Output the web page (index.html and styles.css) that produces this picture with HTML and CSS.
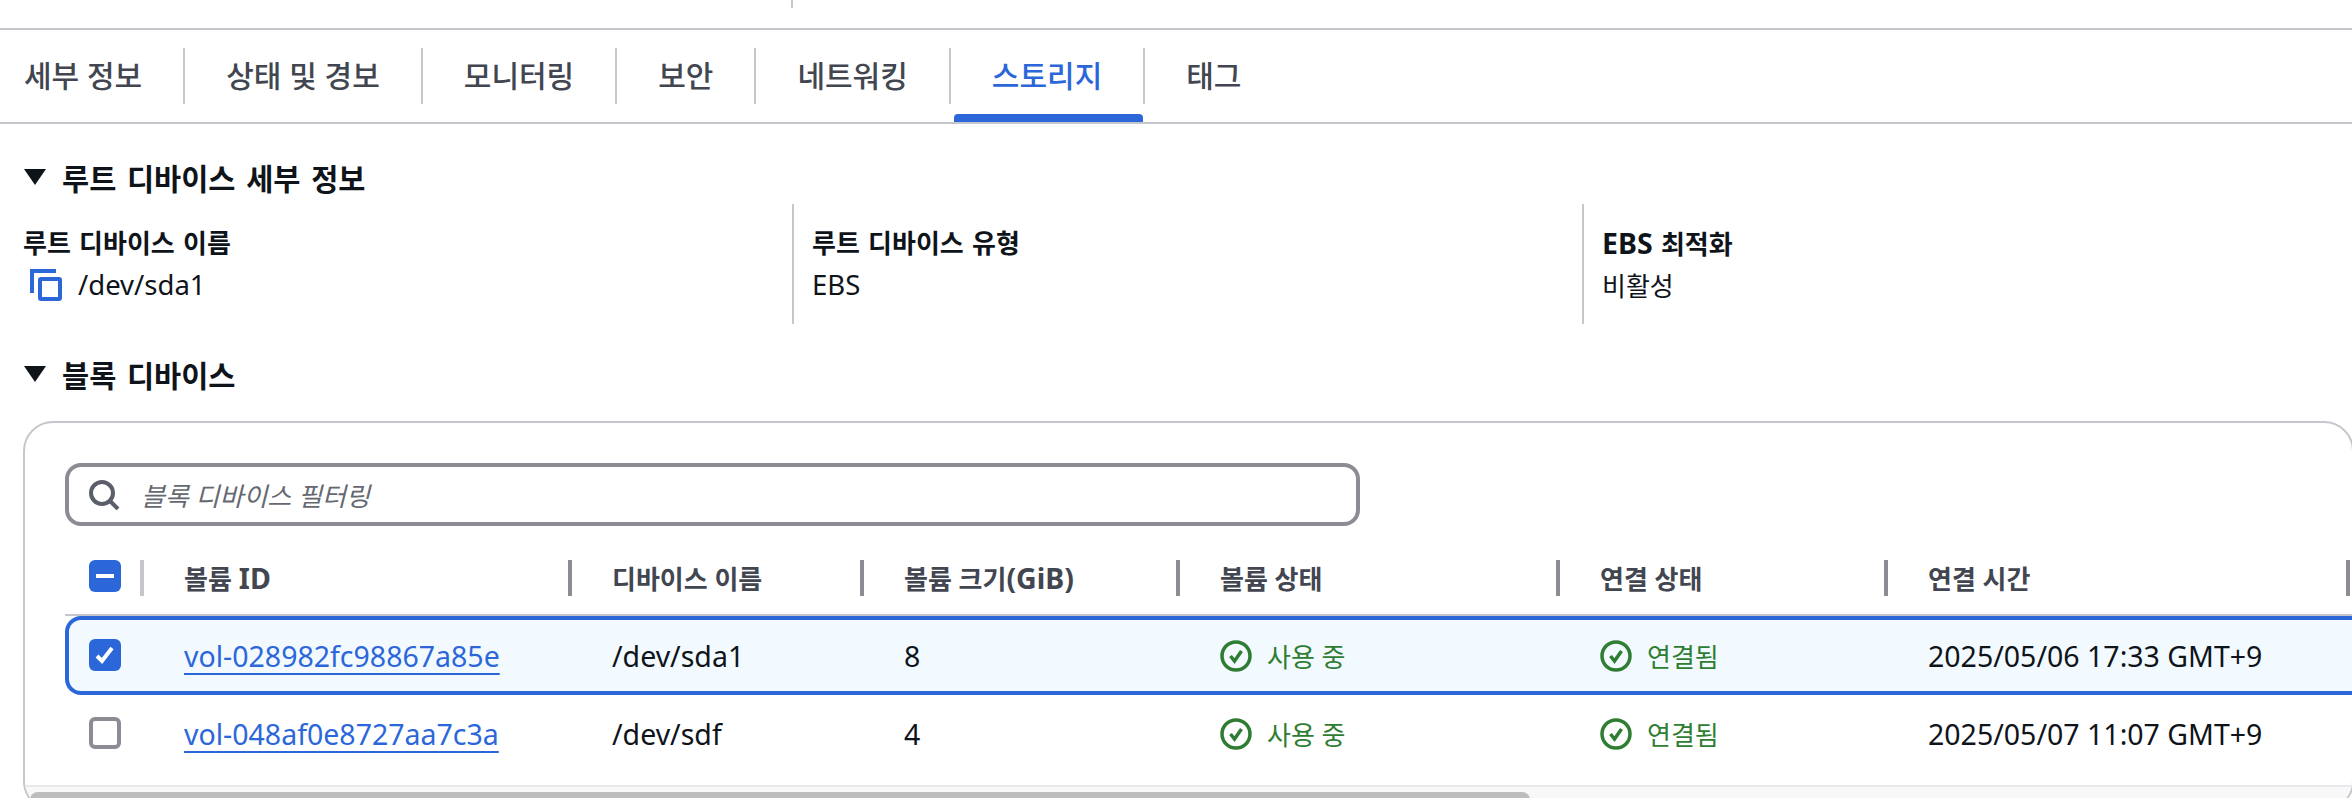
FILE: index.html
```html
<!DOCTYPE html>
<html lang="ko">
<head>
  <meta charset="UTF-8">
  <title>스토리지</title>
  <link rel="stylesheet" href="styles.css">
</head>
<body>
<div class="top-strip"><span class="top-tick"></span></div>

<div class="tabs">
  <div class="tab first">세부 정보</div>
  <div class="tab">상태 및 경보</div>
  <div class="tab">모니터링</div>
  <div class="tab">보안</div>
  <div class="tab">네트워킹</div>
  <div class="tab active">스토리지</div>
  <div class="tab last">태그</div>
</div>

<div class="section-head"><span class="caret"></span>루트 디바이스 세부 정보</div>
<div class="details">
  <div class="detail">
    <div class="label">루트 디바이스 이름</div>
    <div class="value copy">
      <svg class="copy-icon" width="32" height="32" viewBox="0 0 32 32" fill="none" stroke="#2c67d9" stroke-width="4">
        <path d="M2 24V2h24"/>
        <rect x="10" y="10" width="20" height="20" rx="1"/>
      </svg>
      <span class="en">/dev/sda1</span>
    </div>
  </div>
  <div class="detail">
    <div class="label">루트 디바이스 유형</div>
    <div class="value"><span class="en">EBS</span></div>
  </div>
  <div class="detail">
    <div class="label"><span class="en">EBS</span> 최적화</div>
    <div class="value">비활성</div>
  </div>
</div>

<div class="section-head second"><span class="caret"></span>블록 디바이스</div>

<div class="panel">
  <div class="filter">
    <svg width="31" height="30" viewBox="0 0 31 30" fill="none" stroke="#5b5f6a" stroke-width="4">
      <circle cx="13" cy="13" r="11"/>
      <path d="M21 21l8 8"/>
    </svg>
    <span class="filter-text">블록 디바이스 필터링</span>
  </div>

  <div class="row head">
    <div class="cell check"><span class="box on"><span class="dash"></span></span></div>
    <div class="cell">볼륨 <span class="en">ID</span></div>
    <div class="cell">디바이스 이름</div>
    <div class="cell">볼륨 크기<span class="en">(GiB)</span></div>
    <div class="cell">볼륨 상태</div>
    <div class="cell">연결 상태</div>
    <div class="cell">연결 시간</div>
  </div>

  <div class="row selected">
    <div class="cell check">
      <span class="box on">
        <svg width="32" height="32" viewBox="0 0 32 32" fill="none" stroke="#fff" stroke-width="4"><path d="M8 17l5 5 10-13"/></svg>
      </span>
    </div>
    <div class="cell en"><a class="vol">vol-028982fc98867a85e</a></div>
    <div class="cell en">/dev/sda1</div>
    <div class="cell en">8</div>
    <div class="cell status">
      <svg width="32" height="32" viewBox="0 0 32 32" fill="none" stroke="#2e7d32" stroke-width="3.5"><circle cx="16" cy="16" r="14"/><path d="M10.5 16l4 5 7-10"/></svg>
      사용 중
    </div>
    <div class="cell status">
      <svg width="32" height="32" viewBox="0 0 32 32" fill="none" stroke="#2e7d32" stroke-width="3.5"><circle cx="16" cy="16" r="14"/><path d="M10.5 16l4 5 7-10"/></svg>
      연결됨
    </div>
    <div class="cell en">2025/05/06 17:33 GMT+9</div>
  </div>

  <div class="row">
    <div class="cell check"><span class="box"></span></div>
    <div class="cell en"><a class="vol">vol-048af0e8727aa7c3a</a></div>
    <div class="cell en">/dev/sdf</div>
    <div class="cell en">4</div>
    <div class="cell status">
      <svg width="32" height="32" viewBox="0 0 32 32" fill="none" stroke="#2e7d32" stroke-width="3.5"><circle cx="16" cy="16" r="14"/><path d="M10.5 16l4 5 7-10"/></svg>
      사용 중
    </div>
    <div class="cell status">
      <svg width="32" height="32" viewBox="0 0 32 32" fill="none" stroke="#2e7d32" stroke-width="3.5"><circle cx="16" cy="16" r="14"/><path d="M10.5 16l4 5 7-10"/></svg>
      연결됨
    </div>
    <div class="cell en">2025/05/07 11:07 GMT+9</div>
  </div>

  <div class="scroll-track"><div class="scroll-thumb"></div></div>
</div>
</body>
</html>
```

FILE: styles.css
```css
html, body {
  margin: 0;
  height: 798px;
  overflow: hidden;
  background: #fff;
}

body {
  width: 2352px;
  font-family: "Noto Sans", "Noto Sans CJK KR", sans-serif;
  font-size: 26px;
  color: #0f141a;
}

.en {
  font-size: 28.5px;
}

.top-strip {
  height: 28px;
  border-bottom: 2px solid #c6c6cd;
}

.top-tick {
  display: block;
  width: 2px;
  height: 8px;
  margin-left: 791px;
  background: #c6c6cd;
}

/* tabs */
.tabs {
  display: flex;
  height: 92px;
  border-bottom: 2px solid #c6c6cd;
}

.tab {
  position: relative;
  box-sizing: border-box;
  height: 56px;
  margin-top: 18px;
  padding: 0 41px;
  border-right: 2px solid #c6c6cd;
  font-size: 30px;
  font-weight: 500;
  line-height: 56px;
  color: #424650;
  white-space: nowrap;
}

.tab.first {
  padding-left: 24px;
}

.tab.last {
  border-right: 0;
}

.tab.active {
  color: #2c67d9;
}

.tab.active::after {
  content: "";
  position: absolute;
  left: 3px;
  right: 0;
  bottom: -18px;
  height: 8px;
  border-radius: 4px 4px 0 0;
  background: #2c67d9;
}

/* sections */
.section-head {
  display: flex;
  align-items: center;
  margin: 35px 0 0 24px;
  height: 36px;
  font-size: 29.5px;
  font-weight: 700;
  word-spacing: 3px;
}

.section-head.second {
  margin-top: 32px;
}

.caret {
  width: 0;
  height: 0;
  margin-right: 16px;
  border-left: 11px solid transparent;
  border-right: 11px solid transparent;
  border-top: 16px solid #0f141a;
}

.details {
  display: grid;
  grid-template-columns: 769px 790px 1fr;
  margin: 9px 0 0 23px;
}

.detail {
  height: 120px;
  padding-top: 21px;
  box-sizing: border-box;
}

.detail + .detail {
  border-left: 2px solid #c6c6cd;
  padding-left: 18px;
}

.label {
  font-weight: 700;
  word-spacing: 1.5px;
  line-height: 36px;
}

.value {
  margin-top: 6px;
  line-height: 36px;
}

.value .en {
  font-size: 27.5px;
}

.copy {
  display: flex;
  align-items: center;
  gap: 16px;
  padding-left: 7px;
}

/* table panel */
.panel {
  box-sizing: border-box;
  width: 2331px;
  height: 390px;
  margin: 29px 0 0 23px;
  padding-top: 40px;
  border: 2px solid #c6c6cd;
  border-radius: 30px;
  overflow: hidden;
}

.filter {
  display: flex;
  align-items: center;
  gap: 21px;
  box-sizing: border-box;
  width: 1295px;
  height: 63px;
  margin-left: 40px;
  padding-left: 20px;
  border: 4px solid #8c8c94;
  border-radius: 16px;
}

.filter-text {
  font-style: italic;
  color: #656871;
}

.row {
  display: grid;
  grid-template-columns: 79px 428px 292px 316px 380px 328px 462px;
  align-items: center;
  box-sizing: border-box;
  width: 2320px;
  height: 78px;
  margin-left: 40px;
}

.row.head {
  height: 90px;
  padding-top: 16px;
  border-bottom: 2px solid #c6c6cd;
  font-weight: 700;
  color: #424650;
}

.row.selected {
  height: 79px;
  background: #f2faff;
  box-shadow: inset 0 0 0 4px #2c67d9;
  border-radius: 16px 0 0 16px;
}

.cell {
  box-sizing: border-box;
  padding-left: 40px;
  white-space: nowrap;
}

.head .cell {
  display: flex;
  align-items: center;
  gap: 7px;
  height: 36px;
  border-right: 4px solid #8c8c94;
}

.head .cell:nth-child(3),
.head .cell:nth-child(4) {
  gap: 0;
}

.head .cell.check {
  align-items: flex-start;
  border-right-color: #c6c6cd;
}

.cell.check {
  padding-left: 24px;
}

.box {
  display: block;
  box-sizing: border-box;
  width: 32px;
  height: 32px;
  margin-top: -2px;
  border: 4px solid #8c8c94;
  border-radius: 6px;
}

.head .box {
  margin-top: 0;
}

.box.on {
  position: relative;
  border: 0;
  background: #2c67d9;
}

.dash {
  position: absolute;
  left: 7px;
  top: 14px;
  width: 18px;
  height: 4px;
  background: #fff;
}

.vol {
  color: #2c67d9;
  text-decoration: underline;
  text-underline-offset: 6px;
  text-decoration-thickness: 2px;
}

.status {
  display: flex;
  align-items: center;
  gap: 15px;
  color: #2e7d32;
}

.scroll-track {
  height: 70px;
  margin-top: 12px;
  border-top: 2px solid #e9e9ed;
  background: #f8f8f8;
}

.scroll-thumb {
  width: 1500px;
  height: 30px;
  margin: 5px 0 0 5px;
  border-radius: 8px;
  background: #bdbdbd;
}
```
